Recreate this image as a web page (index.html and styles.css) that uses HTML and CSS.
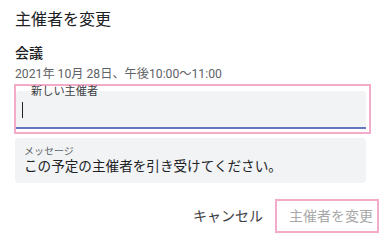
FILE: index.html
```html
<!DOCTYPE html>
<html lang="ja">
<head>
    <meta charset="UTF-8">
    <meta name="viewport" content="width=device-width, initial-scale=1.0">
    <title>主催者を変更</title>
    <link rel="stylesheet" href="styles.css">
</head>
<body>
    <div class="dialog">
        <h1 class="title">主催者を変更</h1>
        <div class="event">
            <h2>会議</h2>
            <p>2021年 10月 28日、午後10:00～11:00</p>
        </div>
        <div class="new-owner">
            <span class="float-label">新しい主催者</span>
            <div class="input-box">
                <span class="caret"></span>
            </div>
        </div>
        <div class="message">
            <span class="msg-label">メッセージ</span>
            <p>この予定の主催者を引き受けてください。</p>
        </div>
        <div class="actions">
            <button class="cancel">キャンセル</button>
            <button class="submit">主催者を変更</button>
        </div>
    </div>
</body>
</html>
```

FILE: styles.css
```css
*{
   margin: 0;
   padding: 0;
   box-sizing: border-box;
}
body{
   background: #fff;
   font-family: Roboto, "Noto Sans CJK JP", sans-serif;
   color: #202124;
}
.dialog{
   width: 383px;
   height: 239px;
   padding: 10px 0 0 15px;
}
.title{
   font-size: 16px;
   font-weight: 400;
   line-height: 20px;
}
.event{
   margin-top: 14px;
}
.event h2{
   font-size: 14px;
   font-weight: 500;
   line-height: 18px;
}
.event p{
   margin-top: 4px;
   font-size: 12.2px;
   line-height: 16px;
   color: #5f6368;
}
.new-owner{
   position: relative;
   width: 357px;
   height: 50px;
   margin: 2px 0 0 -1px;
   border: 2px solid #f4abc9;
   padding: 5px 3px 0 0;
}
/* label sits on top edge of the field */
.float-label{
   position: absolute;
   top: 0;
   left: 13px;
   padding: 0 2px;
   font-size: 11.2px;
   line-height: 12px;
   color: #3c4043;
}
.input-box{
   height: 38px;
   background: #f1f3f4;
   border-radius: 4px 4px 0 0;
   border-bottom: 2px solid #6476c0;
   padding: 11px 0 0 6px;
}
.caret{
   display: block;
   width: 1px;
   height: 16px;
   background: #202124;
}
.message{
   width: 351px;
   height: 45px;
   margin-top: 4px;
   background: #f1f3f4;
   border-radius: 4px;
   padding: 8px 0 0 9px;
}
.msg-label{
   display: block;
   font-size: 10px;
   line-height: 12px;
   color: #5f6368;
}
.message p{
   font-size: 13.6px;
   line-height: 17px;
}
.actions{
   display: flex;
   justify-content: flex-end;
   align-items: center;
   gap: 12px;
   margin-top: 16px;
   padding-right: 4px;
}
.actions button{
   font-family: inherit;
   font-size: 14px;
   background: none;
   border: none;
   line-height: 18px;
   white-space: nowrap;
}
.cancel{
   color: #3c4043;
}
.submit{
   width: 104px;
   height: 34px;
   border: 2px solid #f4abc9 !important;
   padding: 0 0 0 12px;
   text-align: left;
   color: #a8a8a8;
}
```
